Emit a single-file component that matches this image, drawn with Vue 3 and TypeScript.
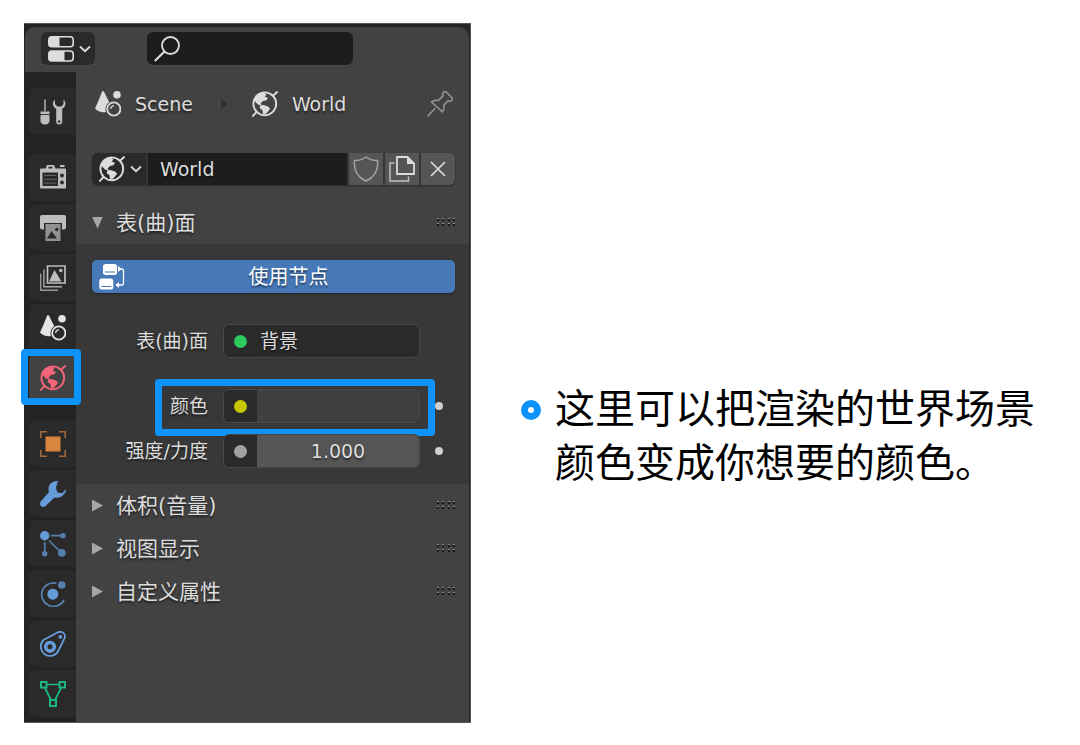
<script setup lang="ts">
import { ref } from 'vue'

interface Tab {
  id: string
  label: string
  tone: string
}

const tabGroups: Tab[][] = [
  [{ id: 'tool', label: '工具', tone: 'grey' }],
  [
    { id: 'render', label: '渲染', tone: 'grey' },
    { id: 'output', label: '输出', tone: 'grey' },
    { id: 'layers', label: '视图层', tone: 'grey' },
    { id: 'scene', label: '场景', tone: 'light' },
    { id: 'world', label: '世界', tone: 'red' },
  ],
  [
    { id: 'object', label: '物体', tone: 'orange' },
    { id: 'wrench', label: '修改器', tone: 'blue' },
    { id: 'particles', label: '粒子', tone: 'blue' },
    { id: 'physics', label: '物理', tone: 'blue' },
    { id: 'constraint', label: '约束', tone: 'blue' },
    { id: 'mesh', label: '数据', tone: 'green' },
  ],
]

const active = ref('world')
const search = ref('')
const worldName = ref('World')
const strength = ref('1.000')
const surfaceOpen = ref(true)
const collapsed = ['体积(音量)', '视图显示', '自定义属性']
</script>

<template>
  <svg class="defs" aria-hidden="true">
    <symbol id="i-tool" viewBox="0 0 26 26">
      <path d="M5 0.500V12" stroke="currentColor" stroke-width="1.400" />
      <path d="M.5 12.500h9v2.500q-1 .8 0 2.500v4q0 4-4.500 4t-4.500-4v-4q1-1.700 0-2.500z" fill="currentColor" />
      <path d="M0 15.500h10" stroke="#2a2a2a" stroke-width="0.900" />
      <path d="M15 .5q-3 3-1.500 6.500 1 2 2.700 2.800V22.500a3 3 0 0 0 6 0V9.800q2-1 2.700-2.800Q26.400 3 23.500.5V5l-2 2.500h-4L15 5z" fill="currentColor" />
      <circle cx="19.200" cy="22.500" r="1.200" fill="#2a2a2a" />
    </symbol>
    <symbol id="i-render" viewBox="0 1.500 26 26">
      <path d="M1 5h4.500l1.500-3.500h7L15.500 5H25q1 0 1 1v18q0 1-1 1H1q-1 0-1-1V6q0-1 1-1z" fill="currentColor" />
      <path d="M8.500 3.300h4V5h-4z" fill="#2a2a2a" />
      <path d="M20 1.500h4.500v2H20z" fill="currentColor" />
      <path d="M2.500 9H18v13.500H2.500z" fill="#2a2a2a" />
      <path d="M4 12h12.500M4 15.800h12.500M4 19.600h12.500" stroke="currentColor" stroke-width="1" opacity=".4" />
      <circle cx="22" cy="12" r="1.900" fill="#2a2a2a" />
      <circle cx="22" cy="19" r="1.900" fill="#2a2a2a" />
    </symbol>
    <symbol id="i-output" viewBox="0 0 26 26">
      <path d="M2 0h22q2 0 2 2v10.500q0 2-2.500 2H22V8H4v6.500H2.500q-2.500 0-2.500-2V2q0-2 2-2z" fill="currentColor" />
      <path d="M5.500 9h15v17h-15z" fill="currentColor" opacity=".7" />
      <path d="M7 23.500l4.500-7.500 5.500 7.500z" fill="#2a2a2a" />
      <circle cx="16.800" cy="14.500" r="1.700" fill="#2a2a2a" />
    </symbol>
    <symbol id="i-layers" viewBox="0 0 26 26">
      <path d="M.7 8.500v16.800H18" fill="none" stroke="currentColor" stroke-width="1.400" opacity=".75" />
      <path d="M3.900 4.500v17.300H22" fill="none" stroke="currentColor" stroke-width="1.400" opacity=".85" />
      <path d="M7.500 1H25v17H7.500z" fill="none" stroke="currentColor" stroke-width="1.700" />
      <path d="M9 16.500l5.500-11.500 7 11.500z" fill="currentColor" />
      <circle cx="20.800" cy="5.500" r="1.800" fill="currentColor" />
    </symbol>
    <symbol id="i-scene" viewBox="0 0 26 26">
      <path d="M7 .7q1-1.400 2 0l5.300 10.600q-4.800 3-3.500 9.700-6 1.200-10.800-3.500Q4 9 7 .7z" fill="currentColor" />
      <circle cx="22" cy="3.800" r="3.800" fill="currentColor" />
      <circle cx="18.800" cy="18" r="6.600" fill="none" stroke="currentColor" stroke-width="1.800" />
      <path d="M15.600 18q.2-2.800 3.200-3.300" fill="none" stroke="currentColor" stroke-width="1.200" />
    </symbol>
    <symbol id="i-world" viewBox="0 0 26 26">
      <circle cx="12.800" cy="12.800" r="11.400" fill="none" stroke="currentColor" stroke-width="1.900" />
      <path d="M20.500 5.300L25.600.5M5 20.500L.3 25.500" stroke="currentColor" stroke-width="1.900" />
      <path d="M2 8.500Q5 2.500 12 1.500l2.500 2.300-2 1.700 3.500 1.300-1.500 2.400-3.500.8-2.500 2.500 1.500 2-4-1L3.500 11z" fill="currentColor" />
      <path d="M8 14.500l3.500-.5 4.500 1.500 2.200 2.200-2.200 2.800-1.700 2-3.300.7-.5-4-2.700-2z" fill="currentColor" />
    </symbol>
    <symbol id="i-object" viewBox="0 0 26 26">
      <path d="M5.500 5.500h15v15h-15z" fill="currentColor" />
      <path d="M.8 7V.8H7M19 .8h6.200V7M25.200 19v6.200H19M7 25.200H.8V19" fill="none" stroke="currentColor" stroke-width="1.600" opacity=".7" />
    </symbol>
    <symbol id="i-wrench" viewBox="0 0 26 26">
      <path d="M18 0q-7 0-9 5-1 3 0 6L.8 20.500q-1.600 2.500.2 4.500 2.500 2 4.800-.3L14.500 16.500q5 1 8-1.800Q26 12 26 8.300l-4 3.900-4.500-.7-1.600-4.500z" fill="currentColor" />
    </symbol>
    <symbol id="i-particles" viewBox="0 0 26 26">
      <circle cx="4.700" cy="4.700" r="4.700" fill="currentColor" />
      <g opacity=".75" fill="currentColor" stroke="currentColor">
        <path d="M11 4.700h10M4.700 11v10M9 9.500l11 11" stroke-width="1.700" />
        <circle cx="23" cy="4.700" r="2.700" stroke="none" />
        <circle cx="4.700" cy="22.800" r="2.700" stroke="none" />
        <circle cx="21.800" cy="21.800" r="3.900" stroke="none" />
      </g>
    </symbol>
    <symbol id="i-physics" viewBox="0 0 26 26">
      <circle cx="12.800" cy="13.200" r="5.500" fill="currentColor" />
      <g opacity=".75">
        <path d="M16.500 2.200A11.800 11.800 0 1 0 24 19" fill="none" stroke="currentColor" stroke-width="1.800" />
        <circle cx="21.800" cy="4" r="3.800" fill="currentColor" />
      </g>
    </symbol>
    <symbol id="i-constraint" viewBox="0 0 26 26">
      <path d="M3.500 9L17.500 1.500q4-1.800 6.500 1 1.500 2 .5 5L18.500 19.500A9.300 9.300 0 1 1 3.500 9z" fill="none" stroke="currentColor" stroke-width="1.800" />
      <circle cx="10" cy="15.800" r="4.300" fill="none" stroke="currentColor" stroke-width="3.600" />
      <circle cx="20.300" cy="5.800" r="1.900" fill="currentColor" />
    </symbol>
    <symbol id="i-mesh" viewBox="0 0 26 26">
      <path d="M6.500 3.500h13M5 7l6 12M21 7l-6 12" stroke="currentColor" stroke-width="1.700" />
      <path d="M1 1h5.500v5.500H1zM19.500 1H25v5.500h-5.500zM10 19h6v6h-6z" fill="none" stroke="currentColor" stroke-width="2" />
    </symbol>
    <symbol id="i-editor" viewBox="0 0 26 26">
      <rect x=".8" y=".8" width="24.400" height="10" rx="3" fill="none" stroke="currentColor" stroke-width="1.600" />
      <path d="M4 .8h7.500v10H4q-3.200 0-3.200-3v-4q0-3 3.200-3z" fill="currentColor" />
      <rect x=".8" y="15" width="24.400" height="10" rx="3" fill="none" stroke="currentColor" stroke-width="1.600" />
      <path d="M4 15h12.500v10H4q-3.200 0-3.200-3v-4q0-3 3.200-3z" fill="currentColor" />
    </symbol>
    <symbol id="i-search" viewBox="0 0 26 26">
      <circle cx="16.500" cy="9.500" r="8.500" fill="none" stroke="currentColor" stroke-width="1.800" />
      <path d="M10.500 15.500L.8 25" stroke="currentColor" stroke-width="2.200" />
    </symbol>
    <symbol id="i-chevron" viewBox="0 0 12 8">
      <path d="M1 1.500l5 4.700 5-4.700" fill="none" stroke="currentColor" stroke-width="1.800" />
    </symbol>
    <symbol id="i-pin" viewBox="0 0 26 26">
      <path d="M.6 25.300l7.600-8M16.500 1.300q1.700-1.300 3.200.2l5.200 5.200q1.300 1.800-.3 3-2 1-3.500 0l-4.300 4.600q.8 4-1.400 6.600L4.500 11q2.800-2.300 7-1.600L16 4.800q-.8-2 .5-3.500z" fill="none" stroke="currentColor" stroke-width="1.500" />
    </symbol>
    <symbol id="i-shield" viewBox="0 0 26 26">
      <path d="M13 1q4.500 3.500 11.500 3.500Q26 19 13 25 0 19 1.500 4.500 8.500 4.500 13 1z" fill="none" stroke="currentColor" stroke-width="1.500" />
    </symbol>
    <symbol id="i-copy" viewBox="0 0 26 26">
      <path d="M8 1h10.500L25 7.500V18H8z" fill="none" stroke="currentColor" stroke-width="1.800" />
      <path d="M18 .3L25.800 8H18z" fill="currentColor" />
      <path d="M5.500 7H1v18h18.500v-4.500" fill="none" stroke="currentColor" stroke-width="1.500" opacity=".8" />
    </symbol>
    <symbol id="i-close" viewBox="0 0 16 16">
      <path d="M1 1l14 14M15 1L1 15" stroke="currentColor" stroke-width="1.700" />
    </symbol>
    <symbol id="i-nodes" viewBox="0 0 26 26">
      <rect x="4" y="0" width="14" height="11" rx="2.500" fill="currentColor" />
      <rect x=".3" y="14.500" width="14" height="11" rx="2.500" fill="currentColor" />
      <path d="M6 8h10M2.300 22.500h10" stroke="#4779b8" stroke-width="1.100" />
      <path d="M20 5h2.500q2 0 2 2v12q0 2-2 2H17" fill="none" stroke="currentColor" stroke-width="1.300" />
      <path d="M19 2l3.500 3L19 8zM20 18v6l-3.500-3z" fill="currentColor" />
    </symbol>
    <symbol id="i-grip" viewBox="0 0 20 10">
      <path d="M1 1h2v2H1zM6 1h2v2H6zM12 1h2v2h-2zM17 1h2v2h-2zM1 6h2v2H1zM6 6h2v2H6zM12 6h2v2h-2zM17 6h2v2h-2z" fill="#161616" />
      <path d="M1 0h2v1H1zM6 0h2v1H6zM12 0h2v1h-2zM17 0h2v1h-2zM1 5h2v1H1zM6 5h2v1H6zM12 5h2v1h-2zM17 5h2v1h-2z" fill="#8a8a8a" />
    </symbol>
  </svg>

  <main class="page">
    <section class="editor" aria-label="属性编辑器">
      <header class="topbar">
        <button class="mode" type="button" aria-label="编辑器类型">
          <svg class="icon"><use href="#i-editor" /></svg>
          <svg class="chevron"><use href="#i-chevron" /></svg>
        </button>
        <label class="search">
          <svg class="icon"><use href="#i-search" /></svg>
          <input v-model="search" type="text" aria-label="搜索" />
        </label>
      </header>

      <div class="columns">
        <nav class="tabs" aria-label="属性">
          <div v-for="(group, g) in tabGroups" :key="g" class="tab-group">
            <button
              v-for="tab in group"
              :key="tab.id"
              type="button"
              class="tab"
              :class="[tab.tone, { active: active === tab.id }]"
              :aria-label="tab.label"
              @click="active = tab.id"
            >
              <svg class="icon"><use :href="`#i-${tab.id}`" /></svg>
              <span v-if="tab.id === 'world'" class="marker tab-marker"></span>
            </button>
          </div>
        </nav>

        <div class="content">
          <div class="crumbs">
            <svg class="icon"><use href="#i-scene" /></svg>
            <span>Scene</span>
            <span class="crumb-arrow"></span>
            <svg class="icon"><use href="#i-world" /></svg>
            <span>World</span>
            <button class="pin" type="button" aria-label="固定">
              <svg class="icon"><use href="#i-pin" /></svg>
            </button>
          </div>

          <div class="datablock">
            <button class="browse" type="button" aria-label="浏览世界">
              <svg class="icon"><use href="#i-world" /></svg>
              <svg class="chevron"><use href="#i-chevron" /></svg>
            </button>
            <input v-model="worldName" class="name" type="text" aria-label="名称" />
            <button class="action dim" type="button" aria-label="伪用户">
              <svg class="icon"><use href="#i-shield" /></svg>
            </button>
            <button class="action" type="button" aria-label="复制">
              <svg class="icon"><use href="#i-copy" /></svg>
            </button>
            <button class="action" type="button" aria-label="断开">
              <svg class="cross"><use href="#i-close" /></svg>
            </button>
          </div>

          <button class="section" type="button" :aria-expanded="surfaceOpen" @click="surfaceOpen = !surfaceOpen">
            <span class="triangle" :class="{ open: surfaceOpen }"></span>
            <span>表(曲)面</span>
            <svg class="grip"><use href="#i-grip" /></svg>
          </button>

          <div v-if="surfaceOpen" class="body">
            <button class="use-nodes" type="button">
              <svg class="icon"><use href="#i-nodes" /></svg>
              <span>使用节点</span>
            </button>

            <div class="row">
              <label for="surface">表(曲)面</label>
              <button id="surface" class="field shader" type="button">
                <span class="socket green"></span>
                <span>背景</span>
              </button>
            </div>

            <div class="row color-row">
              <label for="color">颜色</label>
              <div class="field">
                <span class="link"><span class="socket yellow"></span></span>
                <button id="color" class="swatch" type="button"></button>
              </div>
              <span class="key"></span>
              <span class="marker row-marker"></span>
            </div>

            <div class="row">
              <label for="strength">强度/力度</label>
              <div class="field">
                <span class="link"><span class="socket grey"></span></span>
                <input id="strength" v-model="strength" class="number" type="text" />
              </div>
              <span class="key"></span>
            </div>
          </div>

          <button v-for="title in collapsed" :key="title" class="section" type="button" aria-expanded="false">
            <span class="triangle"></span>
            <span>{{ title }}</span>
            <svg class="grip"><use href="#i-grip" /></svg>
          </button>
        </div>
      </div>
    </section>

    <ul class="note">
      <li>这里可以把渲染的世界场景颜色变成你想要的颜色。</li>
    </ul>
  </main>
</template>

<style>
body {
  margin: 0;
  background: #fff;
}
</style>

<style scoped>
* {
  box-sizing: border-box;
}

.defs {
  position: absolute;
  width: 0;
  height: 0;
}

.page {
  display: grid;
  grid-template-columns: 447fr 609fr;
  min-height: 100vh;
  padding: 23px 0 22px 24px;
  font-family: "DejaVu Sans", "Noto Sans CJK SC", sans-serif;
  font-size: 19px;
  line-height: 24px;
}

button,
input {
  margin: 0;
  padding: 0;
  border: 0;
  background: none;
  color: inherit;
  font: inherit;
  text-shadow: inherit;
}

svg {
  display: block;
  flex: none;
}

.icon {
  width: 26px;
  height: 26px;
}

.chevron {
  width: 12px;
  height: 8px;
}

.editor {
  display: flex;
  flex-direction: column;
  min-width: 0;
  padding: 3px 1px 0 1px;
  border: 1px solid #555;
  border-width: 1px 1px 1px 0;
  background: #232323;
  color: #dcdcdc;
  text-shadow: 0 2px 2px #00000080;
}

.topbar {
  display: flex;
  gap: 52px;
  padding: 5px 16px 7px;
  height: 45px;
  border-radius: 10px 10px 0 0;
  background: #424242;
}

.mode,
.search {
  display: flex;
  align-items: center;
  height: 33px;
  border-radius: 6px;
  box-shadow: 0 1px 1px #4c4c4c;
}

.mode {
  gap: 5px;
  width: 54px;
  padding-left: 7px;
  background: #2a2a2a;
}

.search {
  flex: 0 1 206px;
  min-width: 0;
  padding-left: 7px;
  background: #1d1d1d;
}

.search input {
  flex: 1;
  min-width: 0;
  outline: none;
}

.columns {
  display: flex;
  flex: 1;
}

.tabs {
  display: flex;
  flex-direction: column;
  gap: 19px;
  width: 51px;
  padding: 16px 0 4px 4px;
}

.tab-group {
  display: flex;
  flex-direction: column;
  gap: 3px;
}

.tab {
  position: relative;
  display: flex;
  align-items: center;
  justify-content: center;
  height: 47px;
  border-radius: 6px 0 0 6px;
  background: #2a2a2a;
}

.tab.active {
  background: #424242;
}

.tab.grey { color: #bdbdbd; }
.tab.light { color: #e4e4e4; }
.tab.red { color: #f4647b; }
.tab.orange { color: #d9843f; }
.tab.blue { color: #679cdb; }
.tab.green { color: #19b886; }

.marker {
  position: absolute;
  border: 7px solid #0d93fc;
  border-radius: 4px;
  pointer-events: none;
}

.tab-marker {
  inset: -5px -5px -4px -8px;
}

.row-marker {
  inset: -10px 20px -13px 63px;
}

.content {
  flex: 1;
  min-width: 0;
  background: #424242;
}

.crumbs {
  display: flex;
  align-items: center;
  height: 64px;
  padding: 0 16px 0 19px;
}

.crumbs .icon + span {
  margin-left: 14px;
}

.crumb-arrow {
  margin: 0 24px 0 28px;
  border: 6px solid transparent;
  border-width: 6px 0 6px 7px;
  border-left-color: #303030;
}

.pin {
  margin-left: auto;
  color: #969696;
}

.datablock {
  display: flex;
  gap: 2px;
  height: 32px;
  margin: 17px 14px 16px 16px;
  border-radius: 6px;
  background: #353535;
  box-shadow: 0 1px 2px #2c2c2c;
  overflow: hidden;
}

.browse {
  display: flex;
  align-items: center;
  gap: 5px;
  width: 54px;
  padding-left: 7px;
  background: #2a2a2a;
}

.name {
  flex: 1;
  min-width: 0;
  padding-left: 12px;
  background: #1d1d1d;
}

.action {
  display: flex;
  align-items: center;
  justify-content: center;
  width: 34px;
  background: #555;
}

.action.dim {
  color: #a4a4a4;
}

.cross {
  width: 16px;
  height: 16px;
}

.section {
  display: flex;
  align-items: center;
  width: 100%;
  height: 43px;
  padding: 0 13px 0 16px;
  font-size: 21px;
  text-align: left;
}

.triangle {
  width: 11px;
  height: 12px;
  margin-right: 13px;
  background: #a6a6a6;
  clip-path: polygon(0 0, 100% 50%, 0 100%);
}

.triangle.open {
  clip-path: polygon(0 0, 100% 0, 50% 100%);
}

.grip {
  width: 20px;
  height: 10px;
  margin-left: auto;
}

.body {
  padding: 16px 14px 16px 16px;
  background: #383838;
}

.use-nodes {
  display: flex;
  align-items: center;
  width: 100%;
  height: 33px;
  margin-bottom: 31px;
  padding: 0 7px;
  border-radius: 5px;
  background: #4779b8;
  color: #fff;
  font-size: 20px;
  box-shadow: 0 1px 2px #222;
}

.use-nodes span {
  flex: 1;
  padding-left: 4px;
  text-align: center;
}

.row {
  position: relative;
  display: grid;
  grid-template-columns: 116px 1fr 20px;
  column-gap: 15px;
  align-items: center;
}

.row label {
  text-align: right;
  white-space: nowrap;
}

.color-row {
  margin: 31px 0 11px;
}

.field {
  display: flex;
  min-width: 0;
  height: 34px;
  border: 1px solid #484848;
  border-radius: 6px;
  background: #2a2a2a;
  overflow: hidden;
}

.shader {
  align-items: center;
  gap: 13px;
  padding-left: 10px;
}

.link {
  display: flex;
  align-items: center;
  justify-content: center;
  width: 33px;
}

.socket {
  width: 13px;
  height: 13px;
  border-radius: 50%;
}

.socket.green { background: #2cca5c; }
.socket.yellow { background: #c7c700; }
.socket.grey { background: #a1a1a1; }

.swatch {
  flex: 1;
  background: #404040;
}

.number {
  flex: 1;
  min-width: 0;
  background: #555;
  text-align: center;
}

.key {
  width: 8px;
  height: 8px;
  border-radius: 50%;
  background: #d0d0d0;
}

.note {
  margin: 356px 0 0;
  padding: 0 40px 0 50px;
  color: #000;
  font-family: "Noto Sans CJK SC", sans-serif;
  font-size: 40px;
  line-height: 54px;
  list-style: none;
}

.note li {
  display: grid;
  grid-template-columns: 20px 1fr;
  column-gap: 14px;
}

.note li::before {
  content: "";
  box-sizing: border-box;
  width: 20px;
  height: 20px;
  margin-top: 21px;
  border: 7px solid #0d93fc;
  border-radius: 50%;
}
</style>
